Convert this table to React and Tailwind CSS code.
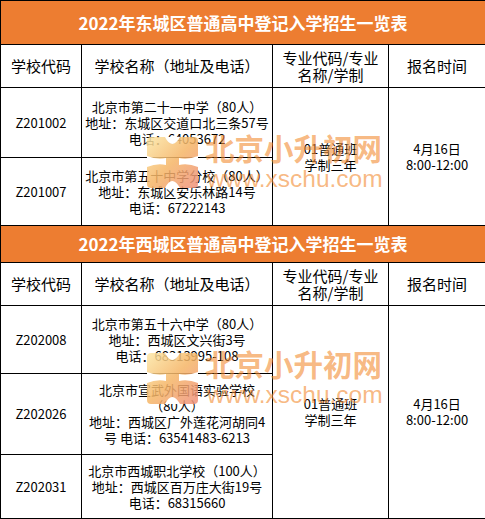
import React from 'react';

const cjk = { fontFamily: '"Noto Sans CJK SC", "Noto Sans", sans-serif' };

const Logo = ({ className }) => (
  <svg className={className} width="51" height="51" viewBox="0 0 51 51">
    <defs>
      <linearGradient id="lg" x1="0" y1="0" x2="1" y2="1">
        <stop offset="0" stopColor="#fce7a6" />
        <stop offset="0.5" stopColor="#f5b566" />
        <stop offset="1" stopColor="#ef8f7c" />
      </linearGradient>
    </defs>
    <rect x="0" y="0" width="51" height="51" rx="4" fill="url(#lg)" opacity="0.85" />
    <path d="M18 0 Q25 14 33 0 Z" fill="#fff" />
    <path d="M0 19 Q10 23 19 21 L19 28 Q10 26 0 30 Z" fill="#fff" />
    <path d="M51 19 Q41 23 32 21 L32 28 Q41 26 51 30 Z" fill="#fff" />
    <path d="M18 51 Q25 37 33 51 Z" fill="#fff" />
  </svg>
);

const Watermark = ({ logoTop, textTop, urlTop }) => (
  <>
    <Logo className={`pointer-events-none absolute left-[147px] ${logoTop}`} />
    <div
      className={`pointer-events-none absolute left-[205px] ${textTop} text-[29.5px] font-bold leading-none text-[rgba(243,140,50,0.62)]`}
      style={cjk}
    >
      北京小升初网
    </div>
    <div
      className={`pointer-events-none absolute left-[207px] ${urlTop} text-[24.5px] leading-none text-[rgba(243,140,50,0.62)]`}
      style={{ fontFamily: '"Liberation Sans", Arial, sans-serif' }}
    >
      www.xschu.com
    </div>
  </>
);

const Cell = ({ children, className = '', ...rest }) => (
  <td className={`whitespace-nowrap border border-black p-0 text-center align-middle ${className}`} {...rest}>
    {children}
  </td>
);

const Section = ({ title, rows, titleH }) => (
  <>
    <tr className={titleH}>
      <td colSpan={4} className="border border-black bg-[#ed7d31] p-0 text-center align-middle text-[17px] font-bold text-white">
        {title}
      </td>
    </tr>
    <tr className="h-[43px] text-[15px]">
      <Cell>学校代码</Cell>
      <Cell>学校名称（地址及电话）</Cell>
      <Cell className="leading-[17px]">专业代码/专业<br />名称/学制</Cell>
      <Cell>报名时间</Cell>
    </tr>
    {rows.map((r, i) => (
      <tr key={r.code} className={`${r.h} text-[13px]`}>
        <Cell>{r.code}</Cell>
        <Cell className="leading-[16px]">
          {r.lines.map((l) => (
            <div key={l}>{l}</div>
          ))}
        </Cell>
        {i === 0 && (
          <>
            <Cell rowSpan={rows.length} className="leading-[16px]">01普通班<br />学制三年</Cell>
            <Cell rowSpan={rows.length} className="leading-[16px]">4月16日<br />8:00-12:00</Cell>
          </>
        )}
      </tr>
    ))}
  </>
);

const dongcheng = [
  { code: 'Z201002', h: 'h-[70px]', lines: ['北京市第二十一中学（80人）', '地址：东城区交道口北三条57号', '电话：64053672'] },
  { code: 'Z201007', h: 'h-[68px]', lines: ['北京市第五十中学分校（80人）', '地址：东城区安乐林路14号', '电话：67222143'] },
];

const xicheng = [
  { code: 'Z202008', h: 'h-[68px]', lines: ['北京市第五十六中学（80人）', '地址：西城区文兴街3号', '电话：68313995-108'] },
  { code: 'Z202026', h: 'h-[81px]', lines: ['北京市宣武外国语实验学校', '（80人）', '地址：西城区广外莲花河胡同4', '号 电话：63541483-6213'] },
  { code: 'Z202031', h: 'h-[64px]', lines: ['北京市西城职北学校（100人）', '地址：西城区百万庄大街19号', '电话：68315660'] },
];

export default function App() {
  return (
    <div className="relative h-[519px] w-[485px] overflow-hidden bg-white text-black" style={cjk}>
      <table className="w-[485px] table-fixed border-collapse">
        <colgroup>
          <col className="w-[81px]" />
          <col className="w-[191px]" />
          <col className="w-[116px]" />
          <col className="w-[97px]" />
        </colgroup>
        <tbody>
          <Section title="2022年东城区普通高中登记入学招生一览表" rows={dongcheng} titleH="h-[44px]" />
          <Section title="2022年西城区普通高中登记入学招生一览表" rows={xicheng} titleH="h-[37px]" />
        </tbody>
      </table>
      <Watermark logoTop="top-[137px]" textTop="top-[133px]" urlTop="top-[167px]" />
      <Watermark logoTop="top-[353px]" textTop="top-[349px]" urlTop="top-[383px]" />
    </div>
  );
}
